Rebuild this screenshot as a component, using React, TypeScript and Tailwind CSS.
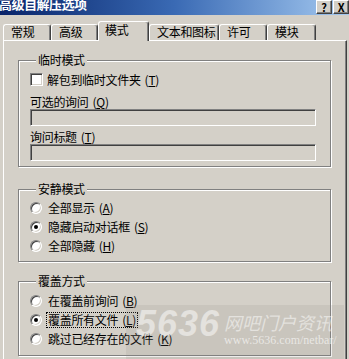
import React from "react";

const tabs = [
  { label: "常规", w: "w-[48px]" },
  { label: "高级", w: "w-[47px]" },
  { label: "模式", w: "w-[51px]", active: true },
  { label: "文本和图标", w: "w-[70px]" },
  { label: "许可", w: "w-[48px]" },
  { label: "模块", w: "w-[49px]" },
];

const Key = ({ k }: { k: string }) => (
  <span className="ml-[4px]">
    (<u className="underline underline-offset-[1px]">{k}</u>)
  </span>
);

const Radio = ({ checked }: { checked?: boolean }) => (
  <span className="relative flex h-[12px] w-[12px] shrink-0 items-center justify-center rounded-full border border-t-[#808080] border-l-[#808080] border-r-white border-b-white bg-white shadow-[inset_1px_1px_0_#404040,inset_-1px_-1px_0_#d4d0c8]">
    {checked && <span className="h-[4px] w-[4px] rounded-full bg-black" />}
  </span>
);

const Sunken = ({ className }: { className: string }) => (
  <div
    className={
      "border border-t-[#808080] border-l-[#808080] border-r-white border-b-white shadow-[inset_1px_1px_0_#404040,inset_-1px_-1px_0_#d4d0c8] " +
      className
    }
  />
);

const Group = ({
  title,
  className,
  children,
}: {
  title: string;
  className: string;
  children: React.ReactNode;
}) => (
  <fieldset
    className={
      "w-[313px] border border-[#808080] shadow-[inset_1px_1px_0_#fff,1px_1px_0_#fff] pl-[11px] " +
      className
    }
  >
    <legend className="ml-[6px] bg-[#d4d0c8] px-[2px] leading-[14px]">{title}</legend>
    {children}
  </fieldset>
);

const RadioRow = ({
  label,
  k,
  checked,
  focus,
}: {
  label: string;
  k: string;
  checked?: boolean;
  focus?: boolean;
}) => (
  <div className="flex h-[19px] items-center">
    <Radio checked={checked} />
    <span
      className={
        "ml-[4px] leading-[14px] " +
        (focus ? "border border-dotted border-black px-[1px]" : "border border-transparent px-[1px]")
      }
    >
      {label}
      <Key k={k} />
    </span>
  </div>
);

export default function App() {
  return (
    <div
      className="relative h-[359px] w-[349px] overflow-hidden bg-[#d4d0c8] text-[12px] tracking-[-0.3px] text-black"
      style={{ fontFamily: '"Noto Sans CJK SC", "Liberation Sans", sans-serif' }}
    >
      {/* title bar */}
      <div className="flex h-[15px] items-start justify-between bg-gradient-to-r from-[#0a246a] via-[#3a6ab4] to-[#a6caf0]">
        <span className="-ml-[1px] -mt-[3px] text-[13px] font-bold leading-[14px] tracking-[-0.5px] text-white">
          高级自解压选项
        </span>
        <div className="flex gap-[1px]">
          <div className="flex h-[14px] w-[16px] items-center justify-center border border-t-white border-l-white border-r-[#404040] border-b-[#404040] bg-[#d4d0c8] text-[11px] font-bold leading-none shadow-[inset_-1px_-1px_0_#808080]">
            ?
          </div>
          <div className="flex h-[14px] w-[16px] items-center justify-center border border-t-white border-l-white border-r-[#404040] border-b-[#404040] bg-[#d4d0c8] text-[11px] font-bold leading-none shadow-[inset_-1px_-1px_0_#808080]">
            X
          </div>
        </div>
      </div>

      {/* tabs */}
      <div className="mt-[6px] flex h-[19px] items-end pl-[3px]">
        {tabs.map((t) =>
          t.active ? (
            <div
              key={t.label}
              className={
                "relative z-10 -mb-[1px] h-[20px] rounded-t-[3px] border-l border-t border-r border-l-white border-t-white border-r-[#404040] bg-[#d4d0c8] pl-[6px] pt-[1px] leading-[14px] shadow-[inset_-1px_0_0_#808080] " +
                t.w
              }
            >
              {t.label}
            </div>
          ) : (
            <div
              key={t.label}
              className={
                "h-[16px] rounded-t-[3px] border-l border-t border-r border-l-white border-t-white border-r-[#404040] pl-[7px] leading-[14px] shadow-[inset_-1px_0_0_#808080] " +
                t.w
              }
            >
              {t.label}
            </div>
          )
        )}
      </div>

      {/* panel */}
      <div className="ml-[3px] h-[330px] w-[344px] border-l border-t border-r border-l-white border-t-white border-r-[#404040] pl-[14px] shadow-[inset_-1px_0_0_#808080]">
        <Group title="临时模式" className="mt-[12px] pb-[5px]">
          <div className="mt-[5px] flex h-[15px] items-center">
            <Sunken className="h-[13px] w-[13px] shrink-0 bg-white" />
            <span className="ml-[4px] leading-[14px]">
              解包到临时文件夹
              <Key k="T" />
            </span>
          </div>
          <div className="mt-[8px] leading-[14px]">
            可选的询问
            <Key k="Q" />
          </div>
          <Sunken className="h-[17px] w-[286px] bg-[#d4d0c8]" />
          <div className="mt-[4px] leading-[14px]">
            询问标题
            <Key k="T" />
          </div>
          <Sunken className="h-[17px] w-[286px] bg-[#d4d0c8]" />
        </Group>

        <Group title="安静模式" className="mt-[15px] pb-[6px]">
          <div className="mt-[2px]">
            <RadioRow label="全部显示" k="A" />
            <RadioRow label="隐藏启动对话框" k="S" checked />
            <RadioRow label="全部隐藏" k="H" />
          </div>
        </Group>

        <Group title="覆盖方式" className="mt-[12px] pb-[7px]">
          <div className="mt-[3px]">
            <RadioRow label="在覆盖前询问" k="B" />
            <RadioRow label="覆盖所有文件" k="L" checked focus />
            <RadioRow label="跳过已经存在的文件" k="K" />
          </div>
        </Group>
      </div>

      {/* watermark */}
      <div className="pointer-events-none absolute left-[126px] top-[305px] flex h-[54px] w-[218px] bg-[#8a8880]/15 pl-[10px] pt-[1px]">
        <span
          className="text-[36px] font-bold italic leading-[36px] tracking-[1px] text-white/50"
          style={{ fontFamily: '"Liberation Sans", sans-serif' }}
        >
          5636
        </span>
        <div className="ml-[4px] flex flex-col">
          <span className="mt-[5px] text-[18px] italic leading-[22px] tracking-[0px] text-white/50">网吧门户资讯</span>
          <span
            className="text-[12px] leading-[14px] tracking-[0px] text-white/60"
            style={{ fontFamily: '"Liberation Serif", serif' }}
          >
            www.5636.com/netbar/
          </span>
        </div>
      </div>
    </div>
  );
}
